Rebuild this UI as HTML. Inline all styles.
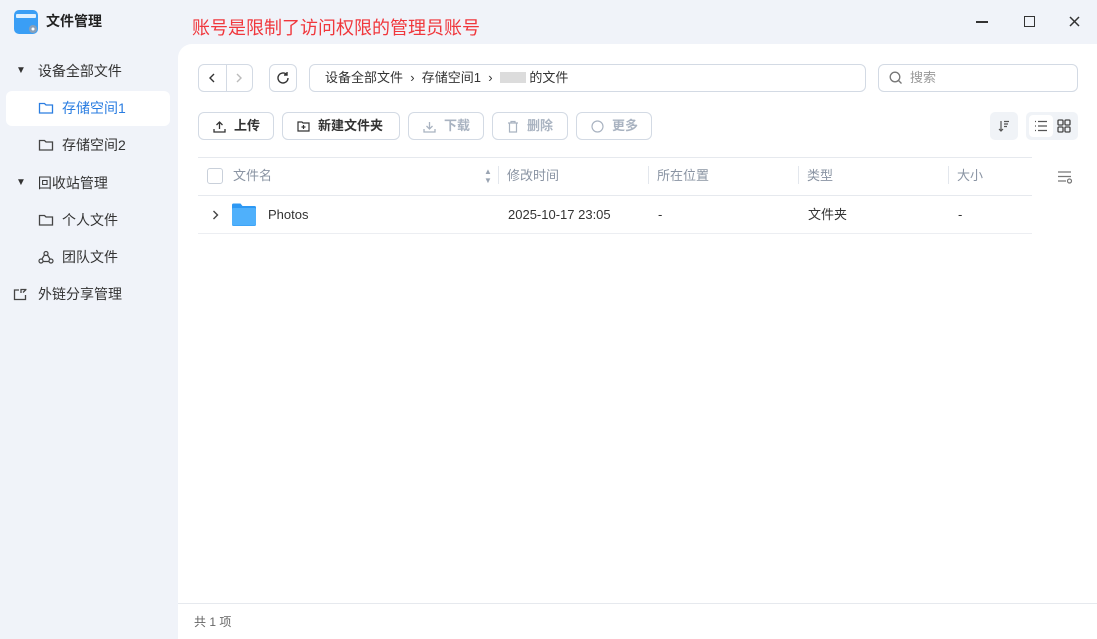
<!DOCTYPE html>
<html><head><meta charset="utf-8"><style>
*{box-sizing:border-box;margin:0;padding:0}
body{width:1097px;height:639px;overflow:hidden;background:#f0f3f9;font-family:"Liberation Sans","Noto Sans CJK SC",sans-serif;font-size:14px;color:#333;position:relative}
.abs{position:absolute;line-height:18px}
.main{position:absolute;left:178px;top:44px;width:919px;height:595px;background:#fff;border-top-left-radius:14px}
.btn{position:absolute;top:64px;height:28px;border:1px solid #d3dae4;border-radius:6px;background:#fff}
.tb{position:absolute;top:112px;height:28px;border:1px solid #d3dae4;border-radius:6px;background:#fff;font-size:13px;font-weight:bold;display:flex;align-items:center;padding-left:14px;gap:8px;color:#333;line-height:18px}
.tb.dis{color:#a9b3c1}
.side{position:absolute;font-size:14px;color:#333;display:flex;align-items:center;line-height:18px}
.hdr{position:absolute;top:167px;font-size:13px;color:#8a94a3;line-height:18px}
.cell{position:absolute;top:206px;font-size:13px;color:#333;line-height:18px}
.sep{position:absolute;top:166px;width:1px;height:18px;background:#e3e7ed}
</style></head><body>
<svg class="abs" style="left:14px;top:10px" width="24" height="24" viewBox="0 0 24 24"><rect x="0" y="0" width="24" height="24" rx="5" fill="#3a9ef5"/><rect x="2" y="4" width="20" height="4" rx="1" fill="#dff0ff"/><circle cx="19" cy="19" r="4" fill="#8aa0b8"/><circle cx="19" cy="19" r="1.5" fill="#fff"/></svg>
<div class="abs" style="left:46px;top:12px;font-size:14px;font-weight:bold;color:#222">文件管理</div>
<div class="abs" style="left:192px;top:16px;font-size:18px;color:#f0373c;line-height:24px">账号是限制了访问权限的管理员账号</div>
<div class="abs" style="left:976px;top:21px;width:12px;height:1.5px;background:#333"></div>
<div class="abs" style="left:1024px;top:16px;width:11px;height:11px;border:1.5px solid #333"></div>
<svg class="abs" style="left:1069px;top:16px" width="11" height="11" viewBox="0 0 11 11"><path d="M1 1l9 9M10 1l-9 9" stroke="#333" stroke-width="1.5"/></svg>

<div class="side" style="left:16px;top:62px"><span style="font-size:10px;margin-right:12px">▼</span>设备全部文件</div>
<div class="abs" style="left:6px;top:91px;width:164px;height:35px;background:#fff;border-radius:6px"></div>
<div class="side" style="left:38px;top:99px;color:#2a7de1"><svg width="16" height="14" viewBox="0 0 16 14" style="margin-right:8px"><path d="M1.5 2.5h5l1.5 1.5h6.5v8h-13z" fill="none" stroke="#2a7de1" stroke-width="1.3"/></svg>存储空间1</div>
<div class="side" style="left:38px;top:136px"><svg width="16" height="14" viewBox="0 0 16 14" style="margin-right:8px"><path d="M1.5 2.5h5l1.5 1.5h6.5v8h-13z" fill="none" stroke="#444" stroke-width="1.3"/></svg>存储空间2</div>
<div class="side" style="left:16px;top:174px"><span style="font-size:10px;margin-right:12px">▼</span>回收站管理</div>
<div class="side" style="left:38px;top:211px"><svg width="16" height="14" viewBox="0 0 16 14" style="margin-right:8px"><path d="M1.5 2.5h5l1.5 1.5h6.5v8h-13z" fill="none" stroke="#444" stroke-width="1.3"/></svg>个人文件</div>
<div class="side" style="left:38px;top:248px"><svg width="16" height="14" viewBox="0 0 16 14" style="margin-right:8px"><circle cx="8" cy="3.5" r="2" fill="none" stroke="#444" stroke-width="1.2"/><circle cx="3" cy="11" r="2" fill="none" stroke="#444" stroke-width="1.2"/><circle cx="13" cy="11" r="2" fill="none" stroke="#444" stroke-width="1.2"/><path d="M6.5 5L4 9M9.5 5L12 9M5 11.5h6" stroke="#444" stroke-width="1.2"/></svg>团队文件</div>
<div class="side" style="left:13px;top:285px"><svg width="16" height="14" viewBox="0 0 16 14" style="margin-right:9px"><path d="M6 3H1.5v9.5h11V8M8 6V2.5h5.5M13 2.5l-3 3" fill="none" stroke="#444" stroke-width="1.3"/></svg>外链分享管理</div>

<div class="main"></div>
<div class="btn" style="left:198px;width:55px"><div class="abs" style="left:27px;top:0;width:1px;height:26px;background:#d3dae4"></div>
<svg class="abs" style="left:9px;top:8px" width="8" height="10" viewBox="0 0 8 10"><path d="M6 1L2 5l4 4" fill="none" stroke="#333" stroke-width="1.4"/></svg>
<svg class="abs" style="left:36px;top:8px" width="8" height="10" viewBox="0 0 8 10"><path d="M2 1l4 4-4 4" fill="none" stroke="#bbb" stroke-width="1.4"/></svg></div>
<div class="btn" style="left:269px;width:28px"><svg class="abs" style="left:6px;top:6px" width="14" height="14" viewBox="0 0 14 14"><path d="M12 7a5 5 0 1 1-1.5-3.6M11 1v3h-3" fill="none" stroke="#333" stroke-width="1.4"/></svg></div>
<div class="btn" style="left:309px;width:557px;font-size:13px;padding:4px 0 0 15px;color:#333;line-height:18px">设备全部文件 &nbsp;›&nbsp; 存储空间1 &nbsp;›&nbsp; <span style="display:inline-block;width:26px;height:11px;background:#dcdcdc;vertical-align:-1px"></span> 的文件</div>
<div class="btn" style="left:878px;width:200px;font-size:13px;color:#999;padding:4px 0 0 31px;line-height:18px">搜索<svg class="abs" style="left:10px;top:6px" width="14" height="14" viewBox="0 0 14 14"><circle cx="6" cy="6" r="4.8" fill="none" stroke="#777" stroke-width="1.3"/><path d="M9.5 9.5l3 3" stroke="#777" stroke-width="1.3"/></svg></div>

<div class="tb" style="left:198px;width:76px"><svg width="13" height="13" viewBox="0 0 13 13"><path d="M6.5 9V2M3.5 5l3-3 3 3M1 9v3h11V9" fill="none" stroke="#333" stroke-width="1.3"/></svg>上传</div>
<div class="tb" style="left:282px;width:118px"><svg width="13" height="12" viewBox="0 0 13 12"><path d="M1 2h4l1 1h6v8H1z M6.5 5v4M4.5 7h4" fill="none" stroke="#333" stroke-width="1.2"/></svg>新建文件夹</div>
<div class="tb dis" style="left:408px;width:76px"><svg width="13" height="13" viewBox="0 0 13 13"><path d="M6.5 2v7M3.5 6l3 3 3-3M1 9v3h11V9" fill="none" stroke="#a9b3c1" stroke-width="1.3"/></svg>下载</div>
<div class="tb dis" style="left:492px;width:76px"><svg width="12" height="13" viewBox="0 0 12 13"><path d="M1 3h10M4 3V1.5h4V3M2.5 3v9h7V3" fill="none" stroke="#a9b3c1" stroke-width="1.2"/></svg>删除</div>
<div class="tb dis" style="left:576px;width:76px"><svg width="13" height="13" viewBox="0 0 13 13"><circle cx="6.5" cy="6.5" r="5.5" fill="none" stroke="#a9b3c1" stroke-width="1.2"/></svg>更多</div>

<div class="abs" style="left:990px;top:112px;width:28px;height:28px;background:#f0f3f7;border-radius:5px"><svg class="abs" style="left:8px;top:8px" width="12" height="12" viewBox="0 0 12 12"><path d="M3 1v10M1 9l2 2 2-2M6 1.5h5M6 4h4M6 6.5h3" fill="none" stroke="#555" stroke-width="1.2"/></svg></div>
<div class="abs" style="left:1026px;top:112px;width:52px;height:28px;background:#f0f3f7;border-radius:5px"><div class="abs" style="left:3px;top:3px;width:24px;height:22px;background:#fff;border-radius:4px"></div>
<svg class="abs" style="left:8px;top:8px" width="14" height="12" viewBox="0 0 14 12"><path d="M1 1.5h1M4 1.5h9M1 6h1M4 6h9M1 10.5h1M4 10.5h9" stroke="#555" stroke-width="1.3"/></svg>
<svg class="abs" style="left:31px;top:7px" width="14" height="14" viewBox="0 0 14 14"><rect x="1" y="1" width="5" height="5" rx="1" fill="none" stroke="#444" stroke-width="1.3"/><rect x="8" y="1" width="5" height="5" rx="1" fill="none" stroke="#444" stroke-width="1.3"/><rect x="1" y="8" width="5" height="5" rx="1" fill="none" stroke="#444" stroke-width="1.3"/><rect x="8" y="8" width="5" height="5" rx="1" fill="none" stroke="#444" stroke-width="1.3"/></svg></div>

<div class="abs" style="left:198px;top:157px;width:834px;height:1px;background:#e6e9ee"></div>
<div class="abs" style="left:207px;top:168px;width:16px;height:16px;border:1px solid #c9d0da;border-radius:3px"></div>
<div class="hdr" style="left:233px">文件名</div>
<div class="abs" style="left:484px;top:167px;font-size:8px;color:#9aa4b2;line-height:9px">▲<br>▼</div>
<div class="sep" style="left:498px"></div><div class="hdr" style="left:507px">修改时间</div>
<div class="sep" style="left:648px"></div><div class="hdr" style="left:657px">所在位置</div>
<div class="sep" style="left:798px"></div><div class="hdr" style="left:807px">类型</div>
<div class="sep" style="left:948px"></div><div class="hdr" style="left:957px">大小</div>
<svg class="abs" style="left:1057px;top:170px" width="16" height="14" viewBox="0 0 16 14"><path d="M1 2h13M1 6.5h13M1 11h8" stroke="#777" stroke-width="1.3"/><circle cx="12.5" cy="11" r="2" fill="#fff" stroke="#777" stroke-width="1.2"/></svg>
<div class="abs" style="left:198px;top:195px;width:834px;height:1px;background:#e6e9ee"></div>
<svg class="abs" style="left:212px;top:210px" width="7" height="10" viewBox="0 0 7 10"><path d="M1.5 1l4 4-4 4" fill="none" stroke="#444" stroke-width="1.4"/></svg>
<svg class="abs" style="left:231px;top:203px" width="26" height="24" viewBox="0 0 26 24"><path d="M1 2a1.5 1.5 0 0 1 1.5-1.5h7l2 2.5h12a1.5 1.5 0 0 1 1.5 1.5v17a1.5 1.5 0 0 1-1.5 1.5h-21A1.5 1.5 0 0 1 1 21.5z" fill="#2d98f3"/><rect x="1" y="5" width="24" height="17.5" rx="1.5" fill="#4fb0fb"/></svg>
<div class="cell" style="left:268px">Photos</div>
<div class="cell" style="left:508px">2025-10-17 23:05</div>
<div class="cell" style="left:658px">-</div>
<div class="cell" style="left:808px">文件夹</div>
<div class="cell" style="left:958px">-</div>
<div class="abs" style="left:198px;top:233px;width:834px;height:1px;background:#eceef2"></div>
<div class="abs" style="left:178px;top:603px;width:919px;height:1px;background:#e6e9ee"></div>
<div class="abs" style="left:194px;top:613px;font-size:12px;color:#666">共 1 项</div>
</body></html>
